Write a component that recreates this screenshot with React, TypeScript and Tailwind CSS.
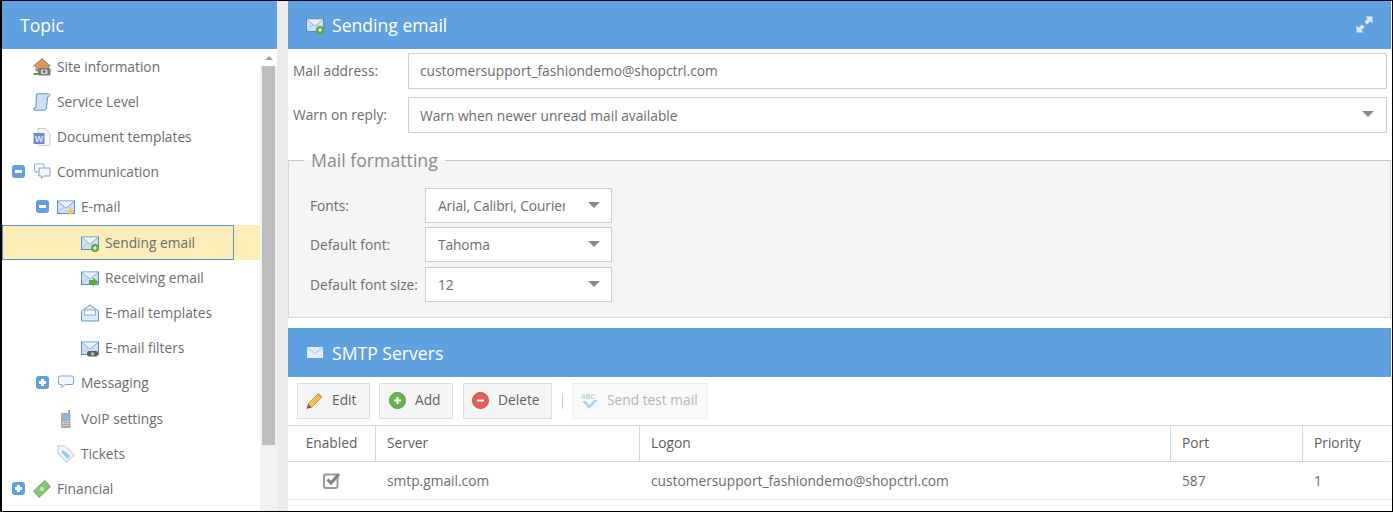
import type { ReactNode } from 'react'

const Envelope = ({ children, size = 18 }: { children?: ReactNode; size?: number }) => (
  <svg width={size} height={size} viewBox="0 0 18 18" className="shrink-0">
    <rect x="0.5" y="3" width="17" height="12.5" fill="#cfe0f5" stroke="#5f8ac0" />
    <path d="M1 3.5 L9 10 L17 3.5" fill="#eef5fc" stroke="#8aaed8" />
    <path d="M1 15 L7 8.5 M17 15 L11 8.5" fill="none" stroke="#a9c4e4" />
    {children}
  </svg>
)

const GreenDot = () => (
  <>
    <circle cx="14" cy="14" r="4" fill="#5da93f" />
    <path d="M12 14 H16 M14 12 V16" stroke="#fff" strokeWidth="1.2" />
  </>
)

const icons: Record<string, ReactNode> = {
  site: (
    <svg width="18" height="18" viewBox="0 0 18 18" className="shrink-0">
      <path d="M0.5 8 L9 0.5 L17.5 8 L15.5 8 L15.5 13 L3 13 L3 8 Z" fill="#d19a5e" stroke="#9a6a38" strokeWidth="0.7" />
      <rect x="5" y="10" width="12.5" height="7.5" rx="1.5" fill="#777" />
      <rect x="8" y="11.5" width="6.5" height="4.5" rx="1" fill="#d5d5d5" />
      <circle cx="11.2" cy="13.7" r="1.4" fill="#666" />
      <path d="M0.5 16 H5" stroke="#4fa23c" strokeWidth="2" />
    </svg>
  ),
  service: (
    <svg width="18" height="18" viewBox="0 0 18 18" className="shrink-0">
      <path d="M4 0.8 H15.5 C17 0.8 17.5 2.5 16 3.5 L14.5 4 L13.5 15 C13.4 16.5 12.5 17.2 11 17.2 H2 C0.5 17.2 0 15.5 1.8 14.8 L2.8 14.5 L3.4 2 C3.5 1.2 3.7 0.8 4 0.8 Z" fill="#cfe0f5" stroke="#5f8dc6" />
    </svg>
  ),
  doc: (
    <svg width="18" height="18" viewBox="0 0 18 18" className="shrink-0">
      <path d="M5 0.5 H12 L17 5.5 V17.5 H5 Z" fill="#f7f7f7" stroke="#cacaca" />
      <rect x="0.5" y="5" width="11" height="11" fill="#6f88cf" />
      <text x="6" y="13.5" textAnchor="middle" fontSize="9" fontWeight="700" fill="#dfe7fa" fontFamily="'Liberation Sans',sans-serif">W</text>
    </svg>
  ),
  comm: (
    <svg width="18" height="18" viewBox="0 0 18 18" className="shrink-0">
      <path d="M1.5 1 H11 V8 H5 L3 10 V8 H1.5 Z" fill="#fff" stroke="#8fb0d8" />
      <path d="M6 5 H17 V13 H11 L8.5 15.5 V13 H6 Z" fill="#f2f7fd" stroke="#7ea3d0" />
    </svg>
  ),
  email: (
    <Envelope>
      <path d="M13.5 10 L14.6 12.3 L17.2 12.7 L15.3 14.5 L15.8 17.2 L13.5 15.9 L11.2 17.2 L11.7 14.5 L9.8 12.7 L12.4 12.3 Z" fill="#f2c544" />
    </Envelope>
  ),
  sending: (
    <Envelope>
      <GreenDot />
    </Envelope>
  ),
  receiving: (
    <Envelope>
      <path d="M8 11 H12 V8.5 L17.5 13 L12 17.5 V15 H8 Z" fill="#5da93f" />
    </Envelope>
  ),
  templates: (
    <svg width="18" height="18" viewBox="0 0 18 18" className="shrink-0">
      <path d="M0.5 7 L9 1 L17.5 7 V17 H0.5 Z" fill="#dce9f8" stroke="#6d94c4" />
      <rect x="3.5" y="6" width="11" height="5" fill="#fff" stroke="#8aaed8" />
    </svg>
  ),
  filters: (
    <Envelope>
      <rect x="6" y="12" width="11" height="5.5" rx="2" fill="#5f5f5f" />
      <circle cx="11.5" cy="14.7" r="1.5" fill="#cfcfcf" />
    </Envelope>
  ),
  messaging: (
    <svg width="18" height="18" viewBox="0 0 18 18" className="shrink-0">
      <path d="M3 2 H15 Q16.5 2 16.5 3.5 V9 Q16.5 10.5 15 10.5 H8 L5 13.5 V10.5 H3 Q1.5 10.5 1.5 9 V3.5 Q1.5 2 3 2 Z" fill="#f2f7fd" stroke="#7ea3d0" />
    </svg>
  ),
  voip: (
    <svg width="18" height="18" viewBox="0 0 18 18" className="shrink-0">
      <rect x="4" y="3" width="9.5" height="15" rx="1" fill="#a8a8a8" />
      <rect x="11.5" y="0" width="1.5" height="3" fill="#888" />
      <rect x="5.5" y="4.5" width="6.5" height="5" fill="#7dbcf0" />
      <path d="M5.5 11.5 H12 M5.5 13.5 H12 M5.5 15.5 H12" stroke="#e8e8e8" strokeDasharray="1.5 0.8" />
    </svg>
  ),
  tickets: (
    <svg width="18" height="18" viewBox="0 0 18 18" className="shrink-0">
      <path d="M0.8 0.8 H8 L17.2 10 L10 17.2 L0.8 8 Z" fill="#f2f5f9" stroke="#d4d4d4" strokeWidth="1.2" />
      <path d="M6 5 L13.5 11 L10.5 14 L4 7 Z" fill="#93ccf5" />
    </svg>
  ),
  financial: (
    <svg width="18" height="18" viewBox="0 0 18 18" className="shrink-0">
      <path d="M0.5 11 L12 0.5 L17.5 6.5 L6 17.5 Z" fill="#86c679" stroke="#6cae5e" />
      <circle cx="9" cy="9" r="2.2" fill="#c2e6b5" />
    </svg>
  ),
}

const Toggle = ({ open }: { open: boolean }) => (
  <span className="relative h-[13px] w-[13px] shrink-0 rounded-[3px] bg-[#5fa0df]">
    <span className="absolute left-[3px] top-[5px] h-[3px] w-[7px] bg-white" />
    {!open && <span className="absolute left-[5px] top-[3px] h-[7px] w-[3px] bg-white" />}
  </span>
)

const tree = [
  { label: 'Site information', icon: 'site', depth: 0 },
  { label: 'Service Level', icon: 'service', depth: 0 },
  { label: 'Document templates', icon: 'doc', depth: 0 },
  { label: 'Communication', icon: 'comm', depth: 0, open: true },
  { label: 'E-mail', icon: 'email', depth: 1, open: true, tall: true },
  { label: 'Sending email', icon: 'sending', depth: 2, selected: true },
  { label: 'Receiving email', icon: 'receiving', depth: 2 },
  { label: 'E-mail templates', icon: 'templates', depth: 2 },
  { label: 'E-mail filters', icon: 'filters', depth: 2 },
  { label: 'Messaging', icon: 'messaging', depth: 1, open: false, tall: true },
  { label: 'VoIP settings', icon: 'voip', depth: 1 },
  { label: 'Tickets', icon: 'tickets', depth: 1 },
  { label: 'Financial', icon: 'financial', depth: 0, open: false },
]

const indent = ['w-[31px]', 'w-[55px]', 'w-[79px]']

const Arrow = () => (
  <span className="h-0 w-0 shrink-0 -translate-y-px border-x-[6px] border-t-[6px] border-x-transparent border-t-[#8a8a8a]" />
)

const Select = ({ value, wide }: { value: string; wide?: boolean }) => (
  <div
    className={
      'flex items-center justify-between border border-[#cfcfcf] bg-white ' +
      (wide ? 'h-[36px] flex-1 pl-[11px] pr-[12px]' : 'h-[35px] w-[187px] pl-[12px] pr-[11px]')
    }
  >
    <span className={'translate-y-px overflow-hidden whitespace-nowrap ' + (wide ? '' : 'w-[127px] tracking-[-0.1px]')}>{value}</span>
    <Arrow />
  </div>
)

const ToolButton = ({ label, icon, width, disabled }: { label: string; icon: ReactNode; width: string; disabled?: boolean }) => (
  <div
    className={
      'flex h-[36px] items-center gap-[9px] border pb-px ' +
      width +
      (disabled ? ' border-[#ececec] bg-[#f9f9f9] text-[#b5b5b5]' : ' border-[#dedede] bg-[#f5f5f5] text-[#5f5f5f]')
    }
  >
    {icon}
    <span>{label}</span>
  </div>
)

const Th = ({ width, children, center }: { width: string; children: ReactNode; center?: boolean }) => (
  <div className={'flex items-center border-r border-[#d6d6d6] last:border-r-0 ' + width + (center ? ' justify-center' : ' pl-[11px]')}>
    {children}
  </div>
)

const Td = ({ width, children, center }: { width: string; children: ReactNode; center?: boolean }) => (
  <div className={'flex items-center ' + width + (center ? ' justify-center' : ' pl-[12px] pt-[2px]')}>{children}</div>
)

export default function App() {
  return (
    <div className="flex h-[512px] w-[1393px] overflow-hidden border-y border-l-2 border-r border-black bg-white font-['Open_Sans',sans-serif] text-[13.75px] text-[#6c6c6c]">
      <div className="flex w-[275px] shrink-0 flex-col">
        <div className="flex h-[48px] items-center bg-[#5fa0df] pl-[18px] text-[17.6px] text-white">Topic</div>
        <div className="flex min-h-0 flex-1">
          <div className="flex w-[258px] flex-col">
            {tree.map((item) => (
              <div
                key={item.label}
                className={
                  'flex shrink-0 items-center ' +
                  (item.tall ? 'h-[36px] ' : 'h-[35px] ') +
                  (item.selected ? 'bg-[#fdeeb9]' : '')
                }
              >
                <div
                  className={
                    'flex h-full items-center ' +
                    (item.selected ? 'w-[232px] border border-[#5c94c9]' : '')
                  }
                >
                  <div className={'relative h-full shrink-0 ' + indent[item.depth] + (item.selected ? ' -ml-px' : '')}>
                    {item.open !== undefined && (
                      <span className="absolute right-[8px] top-[11px] flex">
                        <Toggle open={item.open} />
                      </span>
                    )}
                  </div>
                  <span className="flex w-[24px] shrink-0">{icons[item.icon]}</span>
                  <span className={'whitespace-nowrap ' + (item.tall ? '' : 'translate-y-px')}>{item.label}</span>
                </div>
              </div>
            ))}
          </div>
          <div className="flex w-[17px] flex-col items-center bg-[#f1f1f1]">
            <div className="flex h-[17px] w-full shrink-0 items-center justify-center bg-white">
              <span className="h-0 w-0 border-x-[4px] border-b-[4px] border-x-transparent border-b-[#a3a3a3]" />
            </div>
            <div className="h-[379px] w-[13px] bg-[#bdbdbd]" />
          </div>
        </div>
      </div>

      <div className="w-[11px] shrink-0 bg-[#ebebeb]" />

      <div className="flex min-w-0 flex-1 flex-col pr-px">
        <div className="flex h-[48px] shrink-0 items-center justify-between bg-[#5fa0df] pl-[18px] pr-[18px] text-[17.6px] text-white">
          <div className="flex items-center gap-[8px]">
            <Envelope>
              <GreenDot />
            </Envelope>
            <span>Sending email</span>
          </div>
          <svg width="17" height="17" viewBox="0 0 17 17" className="-translate-y-px">
            <path d="M9.5 0.5 H16.5 V7.5 L14.3 5.3 L11 8.6 L8.4 6 L11.7 2.7 Z" fill="#dbe9f8" />
            <path d="M7.5 16.5 H0.5 V9.5 L2.7 11.7 L6 8.4 L8.6 11 L5.3 14.3 Z" fill="#dbe9f8" />
          </svg>
        </div>

        <div className="flex flex-col gap-[8px] pl-[5px] pr-[4px] pt-[4px]">
          <div className="flex items-center">
            <span className="w-[115px] shrink-0">Mail address:</span>
            <div className="flex h-[36px] flex-1 items-center border border-[#cfcfcf] pl-[11px]">
              customersupport_fashiondemo@shopctrl.com
            </div>
          </div>
          <div className="flex items-center">
            <span className="w-[115px] shrink-0">Warn on reply:</span>
            <Select value="Warn when newer unread mail available" wide />
          </div>
        </div>

        <div className="relative mt-[27px] h-[158px] shrink-0 border border-t-[#c4c4c4] border-x-[#d6d6d6] border-b-[#d6d6d6] bg-[#f5f5f5] pl-[21px] pt-[27px]">
          <span className="absolute -top-[13px] left-[15px] px-[7px] text-[17.7px] leading-[24px] text-[#8a8a8a] [background:linear-gradient(to_bottom,#fff_50%,#f5f5f5_50%)]">
            Mail formatting
          </span>
          <div className="flex flex-col gap-[4px]">
            {[
              ['Fonts:', 'Arial, Calibri, Courier New'],
              ['Default font:', 'Tahoma'],
              ['Default font size:', '12'],
            ].map(([label, value]) => (
              <div key={label} className="flex items-center last:mt-px">
                <span className="w-[115px] shrink-0 translate-y-px">{label}</span>
                <Select value={value} />
              </div>
            ))}
          </div>
        </div>

        <div className="mt-[10px] flex h-[49px] shrink-0 items-center gap-[8px] bg-[#5fa0df] pl-[18px] pt-px text-[17.6px] text-white">
          <svg width="18" height="18" viewBox="0 0 18 18" className="shrink-0 -translate-y-px">
            <rect x="1" y="4" width="16" height="11" fill="#e3eefa" />
            <path d="M1 4.5 L9 10.5 L17 4.5" fill="none" stroke="#a5c6ea" />
          </svg>
          <span>SMTP Servers</span>
        </div>

        <div className="flex h-[48px] shrink-0 items-center pl-[9px]">
          <ToolButton
            label="Edit"
            width="w-[73px] mr-[9px] pl-[8px]"
            icon={
              <svg width="17" height="18" viewBox="0 0 17 18" className="shrink-0">
                <path d="M12.5 1.5 L16 5 L5.5 15.5 L2 12 Z" fill="#f1c24c" stroke="#c8912b" />
                <path d="M2 12 L5.5 15.5 L0.5 17 Z" fill="#8a5a2a" />
                <path d="M12.5 1.5 L16 5 L14.5 6.5 L11 3 Z" fill="#eb9a7c" />
              </svg>
            }
          />
          <ToolButton
            label="Add"
            width="w-[74px] mr-[10px] pl-[9px]"
            icon={
              <svg width="17" height="17" viewBox="0 0 17 17" className="shrink-0">
                <circle cx="8.5" cy="8.5" r="8" fill="#67b34f" stroke="#559c41" />
                <path d="M5 8.5 H12 M8.5 5 V12" stroke="#fff" strokeWidth="2" />
              </svg>
            }
          />
          <ToolButton
            label="Delete"
            width="w-[89px] pl-[8px]"
            icon={
              <svg width="17" height="17" viewBox="0 0 17 17" className="shrink-0">
                <circle cx="8.5" cy="8.5" r="8" fill="#e5605a" stroke="#c94f49" />
                <path d="M5 8.5 H12" stroke="#fff" strokeWidth="2" />
              </svg>
            }
          />
          <div className="ml-[10px] mr-[9px] h-[16px] w-px bg-[#cfcfcf]" />
          <ToolButton
            label="Send test mail"
            width="w-[136px] pl-[8px]"
            disabled
            icon={
              <svg width="17" height="18" viewBox="0 0 17 18" className="shrink-0">
                <path d="M1 9 H5 L8 13 L13 8 H17 L8 17 Z" fill="#a9d3f2" />
                <text x="0" y="7" fontSize="6.5" fontWeight="700" fill="#b5d9bd" fontFamily="'Liberation Sans',sans-serif">ABC</text>
              </svg>
            }
          />
        </div>

        <div className="flex h-[37px] shrink-0 border-y border-[#d6d6d6] text-[#5c5c5c]">
          <Th width="w-[88px]" center>Enabled</Th>
          <Th width="w-[264px]">Server</Th>
          <Th width="w-[531px]">Logon</Th>
          <Th width="w-[132px]">Port</Th>
          <Th width="w-[88px]">Priority</Th>
        </div>
        <div className="flex h-[38px] shrink-0 border-b border-[#e6e6e6]">
          <Td width="w-[87px]" center>
            <svg width="18" height="17" viewBox="0 0 18 17">
              <rect x="1" y="2.5" width="13.5" height="13.5" rx="2" fill="none" stroke="#9a9a9a" strokeWidth="2" />
              <path d="M4.5 7.5 L8 11 L16 2" fill="none" stroke="#808080" strokeWidth="3" />
            </svg>
          </Td>
          <Td width="w-[264px]">smtp.gmail.com</Td>
          <Td width="w-[531px]">customersupport_fashiondemo@shopctrl.com</Td>
          <Td width="w-[132px]">587</Td>
          <Td width="w-[88px]">1</Td>
        </div>
      </div>
    </div>
  )
}
